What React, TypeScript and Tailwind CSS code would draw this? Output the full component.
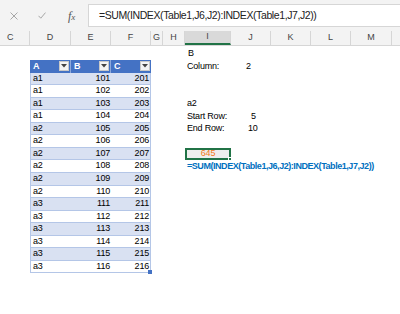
import React from "react";

const cols = [
  { l: "C", w: 30 },
  { l: "D", w: 41 },
  { l: "E", w: 40 },
  { l: "F", w: 40 },
  { l: "G", w: 12 },
  { l: "H", w: 22 },
  { l: "I", w: 46 },
  { l: "J", w: 40 },
  { l: "K", w: 40 },
  { l: "L", w: 40 },
  { l: "M", w: 41 },
];

const colWidth: Record<number, string> = {
  30: "w-[30px]",
  41: "w-[41px]",
  40: "w-[40px]",
  12: "w-[12px]",
  22: "w-[22px]",
  46: "w-[46px]",
};

const rows: [string, number, number][] = [
  ["a1", 101, 201],
  ["a1", 102, 202],
  ["a1", 103, 203],
  ["a1", 104, 204],
  ["a2", 105, 205],
  ["a2", 106, 206],
  ["a2", 107, 207],
  ["a2", 108, 208],
  ["a2", 109, 209],
  ["a2", 110, 210],
  ["a3", 111, 211],
  ["a3", 112, 212],
  ["a3", 113, 213],
  ["a3", 114, 214],
  ["a3", 115, 215],
  ["a3", 116, 216],
];

const Dropdown = () => (
  <div className="w-[10px] h-[10px] bg-[#f4f4f4] border border-[#c8c8c8] flex items-center justify-center mr-[1px]">
    <svg width="6" height="4" viewBox="0 0 6 4">
      <path d="M0 0 L6 0 L3 3.5 Z" fill="#444" />
    </svg>
  </div>
);

const HeadCell = ({ label, w }: { label: string; w: string }) => (
  <div className={`${w} h-full bg-[#4472c4] flex items-center justify-between pl-[3px] border-r border-[#8ea9db] last:border-r-0`}>
    <span className="text-white font-bold">{label}</span>
    <Dropdown />
  </div>
);

export default function App() {
  return (
    <div className="w-[400px] h-[314px] bg-white overflow-hidden font-['Liberation_Sans',Arial,sans-serif] text-[9px] tracking-[-0.2px] text-black">
      {/* formula bar */}
      <div className="bg-[#f3f3f3] h-[46px] flex flex-col">
        <div className="flex items-center h-[23px] mt-[4px]">
          <div className="w-[88px] flex items-center text-[#a6a6a6] h-full">
            <svg className="ml-[10px]" width="8" height="8" viewBox="0 0 8 8">
              <path d="M0.5 0.5 L7.5 7.5 M7.5 0.5 L0.5 7.5" stroke="#a6a6a6" strokeWidth="1" />
            </svg>
            <svg className="ml-[20px]" width="8" height="7" viewBox="0 0 8 7">
              <path d="M0.5 3.8 L2.8 6.2 L7.5 0.6" stroke="#a6a6a6" strokeWidth="1" fill="none" />
            </svg>
            <span className="ml-[22px] italic text-[#555] font-['Liberation_Serif',serif] text-[12px] tracking-normal">
              f<span className="text-[9px]">x</span>
            </span>
          </div>
          <div className="flex-1 h-full bg-white border border-r-0 border-[#d6d6d6] flex items-center pl-[10px] text-[10.5px] tracking-[-0.4px] text-[#222]">
            =SUM(INDEX(Table1,J6,J2):INDEX(Table1,J7,J2))
          </div>
        </div>
        {/* column headers */}
        <div className="flex mt-auto h-[15px] border-b border-[#d6d6d6] text-[#444] text-[9px]">
          {cols.map((c) => (
            <div
              key={c.l}
              className={`${colWidth[c.w]} h-full flex items-center border-r border-[#d6d6d6] ${
                c.l === "C" ? "justify-start pl-[7px]" : "justify-center"
              } ${c.l === "I" ? "bg-[#d9d9d9] border-b-2 border-b-[#217346]" : ""}`}
            >
              {c.l}
            </div>
          ))}
          <div className="flex-1" />
        </div>
      </div>

      {/* sheet body */}
      <div className="flex mt-[1.5px]">
        <div className="w-[30px]" />
        <div className="w-[121px] mt-[12.55px] relative">
          <div className="flex h-[12.55px]">
            <HeadCell label="A" w="w-[41px]" />
            <HeadCell label="B" w="w-[40px]" />
            <HeadCell label="C" w="w-[40px]" />
          </div>
          {rows.map((r, i) => (
            <div
              key={i}
              className={`flex h-[12.55px] border-x border-b border-[#b4c6e7] items-center ${
                i % 2 === 0 ? "bg-[#d9e1f2]" : "bg-white"
              }`}
            >
              <div className="w-[40px] pl-[2px]">{r[0]}</div>
              <div className="w-[40px] text-right pr-[1px]">{r[1]}</div>
              <div className="w-[39px] text-right pr-[1px]">{r[2]}</div>
            </div>
          ))}
          <div className="absolute right-[-1px] bottom-[-1px] w-[4px] h-[4px] bg-[#4472c4]" />
        </div>
        <div className="w-[34px]" />
        <div className="flex flex-col w-[200px]">
          <div className="h-[12.55px] flex items-center pl-[3px]">B</div>
          <div className="h-[12.55px] flex items-center pl-[2px]">
            <span className="w-[59px]">Column:</span>
            <span>2</span>
          </div>
          <div className="h-[12.55px]" />
          <div className="h-[12.55px]" />
          <div className="h-[12.55px] flex items-center pl-[2px]">a2</div>
          <div className="h-[12.55px] flex items-center pl-[2px]">
            <span className="w-[64px]">Start Row:</span>
            <span>5</span>
          </div>
          <div className="h-[12.55px] flex items-center pl-[2px]">
            <span className="w-[61px]">End Row:</span>
            <span>10</span>
          </div>
          <div className="h-[12.55px]" />
          <div className="h-[12.55px] flex">
            <div className="w-[46px] h-full border-2 border-[#217346] bg-[#eeeeee] flex items-center justify-center text-[#f47b20] font-medium relative">
              645
              <div className="absolute right-[-3px] bottom-[-3px] w-[4px] h-[4px] bg-[#217346] border border-white" />
            </div>
          </div>
          <div className="h-[12.55px] flex items-center pl-[2px] font-bold text-[#0070c0] tracking-[-0.45px] whitespace-nowrap">
            =SUM(INDEX(Table1,J6,J2):INDEX(Table1,J7,J2))
          </div>
        </div>
      </div>
    </div>
  );
}
